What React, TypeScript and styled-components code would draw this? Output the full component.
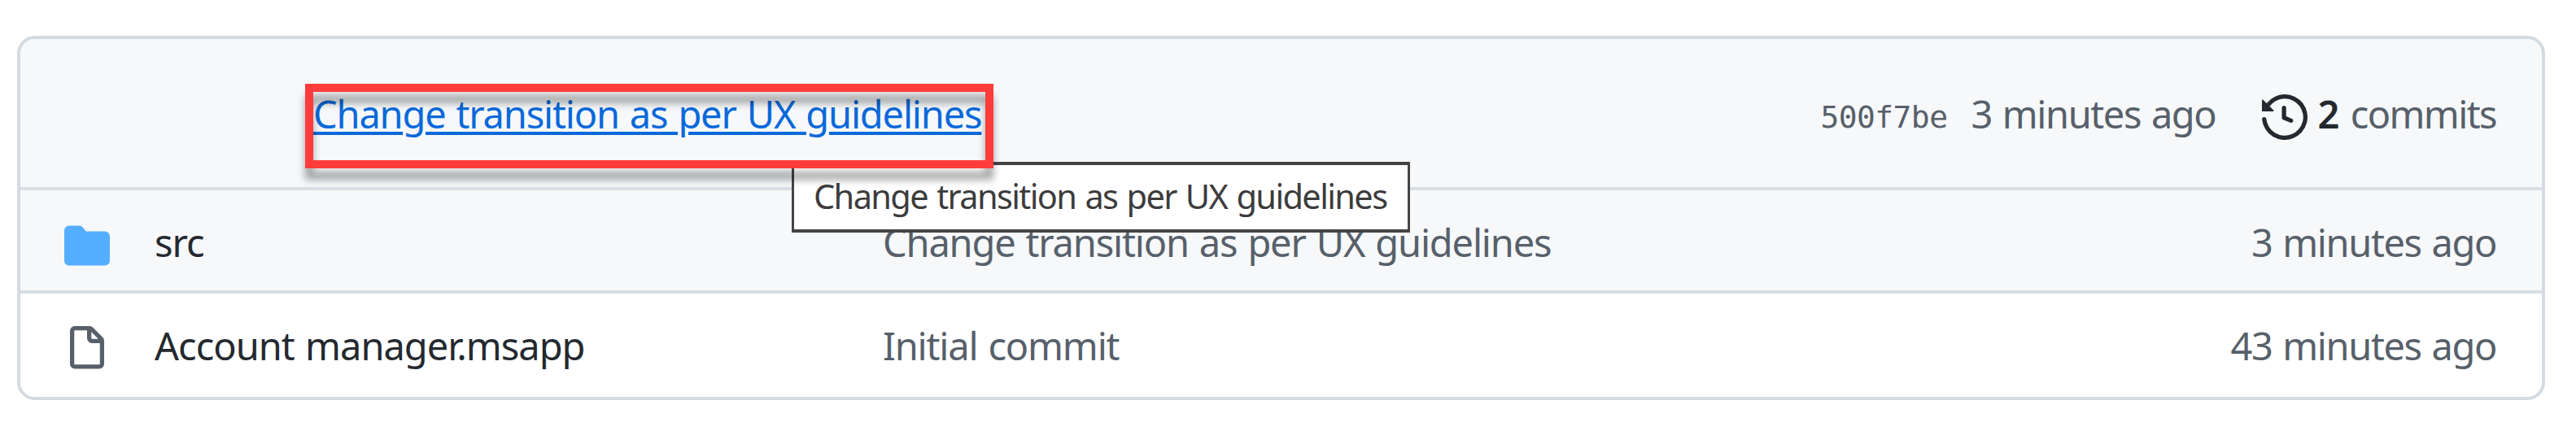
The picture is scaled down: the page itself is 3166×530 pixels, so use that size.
import React from 'react';
import styled, { createGlobalStyle } from 'styled-components';

const GlobalStyle = createGlobalStyle`
  * { box-sizing: border-box; }
  body { margin: 0; background: #fff; }
`;

const Page = styled.main`
  position: relative;
  width: 3166px;
  height: 530px;
  padding: 44px 0 0 21px;
  overflow: hidden;
  font: 47px/64px "Noto Sans", sans-serif;
  letter-spacing: -1.18px;
  word-spacing: 2px;
  white-space: pre;
  color: #57606a;
`;

const Card = styled.section`
  width: 3107px;
  height: 448px;
  border: 4px solid #d3dae1;
  border-radius: 22px;
  overflow: hidden;
`;

const Header = styled.header`
  display: flex;
  align-items: center;
  height: 186px;
  padding: 2px 56px 0 360px;
  background: #f6f8fa;
  border-bottom: 4px solid #d8dee4;
`;

const CommitTitle = styled.div`
  flex: 1;
`;

const CommitLink = styled.a`
  color: #0969da;
  text-decoration: underline;
  text-decoration-thickness: 4px;
  text-underline-offset: 4px;
`;

const Hash = styled.span`
  margin-right: 29px;
  font-family: "DejaVu Sans Mono", monospace;
  font-size: 38px;
  letter-spacing: -0.6px;
  transform: translateY(4px);
`;

const Time = styled.span`
  letter-spacing: -1.4px;
`;

const Commits = styled.span`
  display: flex;
  align-items: center;
  margin-left: 57px;
  letter-spacing: -1.6px;
`;

const Count = styled.strong`
  margin: 0 15px 0 12px;
  font-weight: 600;
  color: #24292f;
`;

const Row = styled.div<{ $active?: boolean }>`
  display: grid;
  grid-template-columns: 111px 895px 1fr auto;
  align-items: center;
  height: 127px;
  padding: ${(p) => (p.$active ? '4px' : '1px')} 56px 0 54px;
  background: ${(p) => (p.$active ? '#f6f8fa' : '#fff')};
  border-bottom: ${(p) => (p.$active ? '4px solid #d8dee4' : 'none')};
`;

const FileName = styled.span`
  letter-spacing: -0.98px;
  color: #24292f;
`;

const Icon = styled.svg<{ $color: string }>`
  display: block;
  width: 56px;
  height: 56px;
  fill: ${(p) => p.$color};
  transform: translateY(4px);
`;

const Tooltip = styled.div`
  position: absolute;
  left: 973px;
  top: 199px;
  width: 760px;
  height: 87px;
  padding: 0 0 0 24px;
  border: 4px solid #444;
  border-width: 4px 3px;
  background: #fff;
  color: #3c3c3c;
  font-size: 41.5px;
  line-height: 77px;
  letter-spacing: -1.62px;
`;

const Highlight = styled.div`
  position: absolute;
  left: 375px;
  top: 103px;
  width: 846px;
  height: 104px;
  border: 10.5px solid #ff3c3c;
  filter: drop-shadow(0 14px 5px rgba(0, 0, 0, 0.35));
`;

const HistoryIcon = () => (
  <Icon viewBox="0 0 16 16" $color="#24292f">
    <path d="M1.643 3.143L.427 1.927A.25.25 0 000 2.104V5.75c0 .138.112.25.25.25h3.646a.25.25 0 00.177-.427L2.715 4.215a6.5 6.5 0 11-1.18 4.458.75.75 0 10-1.493.154 8.001 8.001 0 101.6-5.684zM7.75 4a.75.75 0 01.75.75v2.992l2.028.812a.75.75 0 01-.557 1.392l-2.5-1A.75.75 0 017 8.25v-3.5A.75.75 0 017.75 4z" />
  </Icon>
);

const FolderIcon = () => (
  <Icon viewBox="0 0 16 16" $color="#54aeff">
    <path d="M1.75 1A1.75 1.75 0 000 2.75v10.5C0 14.216.784 15 1.75 15h12.5A1.75 1.75 0 0016 13.25v-8.5A1.75 1.75 0 0014.25 3h-6.5a.25.25 0 01-.2-.1l-.9-1.2c-.33-.44-.85-.7-1.4-.7h-3.5z" />
  </Icon>
);

const FileIcon = () => (
  <Icon viewBox="0 0 16 16" $color="#57606a">
    <path d="M3.75 1.5a.25.25 0 00-.25.25v11.5c0 .138.112.25.25.25h8.5a.25.25 0 00.25-.25V6H9.75A1.75 1.75 0 018 4.25V1.5H3.75zm5.75.56v2.19c0 .138.112.25.25.25h2.19L9.5 2.06zM2 1.75C2 .784 2.784 0 3.75 0h5.086c.464 0 .909.184 1.237.513l3.414 3.414c.329.328.513.773.513 1.237v8.086A1.75 1.75 0 0112.25 15h-8.5A1.75 1.75 0 012 13.25V1.75z" />
  </Icon>
);

export default function App() {
  return (
    <Page>
      <GlobalStyle />
      <Card>
        <Header>
          <CommitTitle>
            <CommitLink href="#">Change transition as per UX guidelines</CommitLink>
          </CommitTitle>
          <Hash>500f7be</Hash>
          <Time>3 minutes ago</Time>
          <Commits>
            <HistoryIcon />
            <Count>2</Count>
            <span>commits</span>
          </Commits>
        </Header>
        <Row $active>
          <FolderIcon />
          <FileName>src</FileName>
          <span>Change transition as per UX guidelines</span>
          <Time>3 minutes ago</Time>
        </Row>
        <Row>
          <FileIcon />
          <FileName>Account manager.msapp</FileName>
          <span>Initial commit</span>
          <Time>43 minutes ago</Time>
        </Row>
      </Card>
      <Tooltip>Change transition as per UX guidelines</Tooltip>
      <Highlight />
    </Page>
  );
}
